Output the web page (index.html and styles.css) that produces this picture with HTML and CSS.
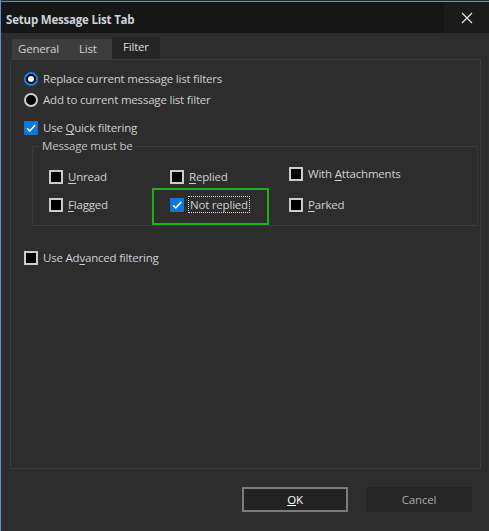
FILE: index.html
```html
<!DOCTYPE html>
<html>
<head>
<meta charset="utf-8">
<link rel="stylesheet" href="styles.css">
</head>
<body>
<div class="window">
  <div class="topstrip"></div>
  <div class="titlebar">
    <div class="title">Setup Message List Tab</div>
    <div class="close">
      <svg width="12" height="12" viewBox="0 0 12 12"><path d="M1 1 L11 11 M11 1 L1 11" stroke="#e6e6e6" stroke-width="1.2" fill="none"/></svg>
    </div>
  </div>
  <div class="body">
    <div class="tabs">
      <div class="tab tab-general">General</div>
      <div class="tab tab-list">List</div>
      <div class="tab active">Filter</div>
    </div>
    <div class="panel">
      <div class="row r1"><span class="radio on"></span><span class="lbl">Replace current message list filters</span></div>
      <div class="row"><span class="radio"></span><span class="lbl">Add to current message list filter</span></div>
      <div class="row r3"><span class="check on"><svg width="14" height="14" viewBox="0 0 14 14"><path d="M3 7.2 L5.8 10 L11.2 4" stroke="#fff" stroke-width="1.5" fill="none"/></svg></span><span class="lbl">Use <u>Q</u>uick filtering</span></div>
      <fieldset class="group">
        <legend>Message must be</legend>
        <div class="grid">
          <div class="row"><span class="check"></span><span class="lbl"><u>U</u>nread</span></div>
          <div class="row"><span class="check"></span><span class="lbl"><u>R</u>eplied</span></div>
          <div class="row up"><span class="check"></span><span class="lbl">With <u>A</u>ttachments</span></div>
          <div class="row"><span class="check"></span><span class="lbl"><u>F</u>lagged</span></div>
          <div class="row"><span class="check on"><svg width="14" height="14" viewBox="0 0 14 14"><path d="M3 7.2 L5.8 10 L11.2 4" stroke="#fff" stroke-width="1.5" fill="none"/></svg></span><span class="lbl focus">Not replied</span></div>
          <div class="row"><span class="check"></span><span class="lbl"><u>P</u>arked</span></div>
        </div>
        <div class="highlight"></div>
      </fieldset>
      <div class="row adv"><span class="check"></span><span class="lbl">Use Ad<u>v</u>anced filtering</span></div>
    </div>
    <div class="footer">
      <div class="btn ok"><span><u>O</u>K</span></div>
      <div class="btn cancel">Cancel</div>
    </div>
  </div>
</div>
</body>
</html>
```
FILE: styles.css
```css
html, body {
  margin: 0;
  padding: 0;
  background: #2d2d2d;
}
body {
  width: 489px;
  height: 531px;
  overflow: hidden;
  font-family: "Open Sans", "Noto Sans", sans-serif;
  font-size: 11.5px;
  letter-spacing: -0.2px;
  color: #cfcfcf;
}
.window {
  width: 488px;
  height: 531px;
  border-left: 1px solid #6b8cc8;
  background: #2d2d2d;
  display: flex;
  flex-direction: column;
}
.topstrip {
  height: 1px;
  background: #2a2a2a;
  border-bottom: 1px solid #6b8cc8;
}
.titlebar {
  height: 31px;
  background: #161616;
  display: flex;
  align-items: center;
  justify-content: space-between;
}
.title {
  padding-left: 5px;
  font-weight: bold;
  color: #ccd3dc;
  font-size: 11.5px;
  letter-spacing: -0.2px;
  margin-top: 4px;
}
.close {
  width: 45px;
  height: 31px;
  background: #1b1b1b;
  display: flex;
  align-items: center;
  justify-content: center;
}
.body {
  flex: 1;
  display: flex;
  flex-direction: column;
}
.tabs {
  display: flex;
  align-items: flex-end;
  padding-left: 11px;
  height: 26px;
}
.tab {
  height: 20px;
  line-height: 20px;
  background: #3d3d3d;
  color: #cfcfcf;
}
.tab-general { width: 56px; padding-left: 6px; box-sizing: border-box; }
.tab-list { width: 44px; padding-left: 11px; box-sizing: border-box; }
.tab.active {
  height: 23px;
  line-height: 20px;
  width: 48px;
  padding-left: 11px;
  box-sizing: border-box;
  background: #252525;
  color: #dcdcdc;
  margin-bottom: -1px;
}
.panel {
  margin-left: 9px;
  width: 471px;
  height: 410px;
  box-sizing: border-box;
  border: 1px solid #3c3c3c;
  padding-top: 8px;
  padding-left: 13px;
}
.row {
  display: flex;
  align-items: center;
  height: 21px;
  gap: 5px;
}
.r3 { margin-top: 7px; }
.radio {
  width: 14px;
  height: 14px;
  box-sizing: border-box;
  border-radius: 50%;
  border: 2px solid #cccccc;
  background: #000;
  position: relative;
  flex: none;
}
.radio.on {
  border-color: #1a82e2;
}
.radio.on::after {
  content: "";
  position: absolute;
  left: 2px;
  top: 2px;
  width: 6px;
  height: 6px;
  border-radius: 50%;
  background: #fff;
}
.check {
  width: 14px;
  height: 14px;
  box-sizing: border-box;
  border: 2px solid #cccccc;
  background: #000;
  flex: none;
  display: flex;
}
.check.on {
  border: none;
  background: #0a78d7;
}
.lbl u { text-decoration-thickness: 1px; text-underline-offset: 2px; }
.group {
  margin: 0 0 0 8px;
  width: 446px;
  height: 88px;
  box-sizing: border-box;
  border: 1px solid #3c3c3c;
  border-right-color: #363636;
  padding: 0;
  position: relative;
  min-width: 0;
}
.group legend {
  margin-left: 6px;
  padding: 0 3px;
  color: #c4c4c4;
  line-height: 16px;
}
.grid {
  display: grid;
  grid-template-columns: 121px 119px 1fr;
  padding-left: 16px;
  padding-top: 12px;
  row-gap: 7px;
}
.grid .up { margin-top: -3px; }
.focus {
  outline: 1px dotted #e0e0e0;
  outline-offset: 0;
  padding: 0 1px;
}
.highlight {
  position: absolute;
  left: 119px;
  top: 34px;
  width: 117px;
  height: 37px;
  box-sizing: border-box;
  border: 2px solid #14b614;
}
.adv { margin-top: 21px; }
.footer {
  display: flex;
  justify-content: flex-end;
  gap: 18px;
  padding-top: 18px;
  padding-right: 17px;
}
.btn {
  height: 25px;
  box-sizing: border-box;
  display: flex;
  align-items: center;
  justify-content: center;
}
.ok {
  width: 106px;
  border: 2px solid #7c7c7c;
  background: #232323;
  color: #ffffff;
}
.cancel {
  width: 106px;
  background: #262626;
  color: #a8a8a8;
}
```
